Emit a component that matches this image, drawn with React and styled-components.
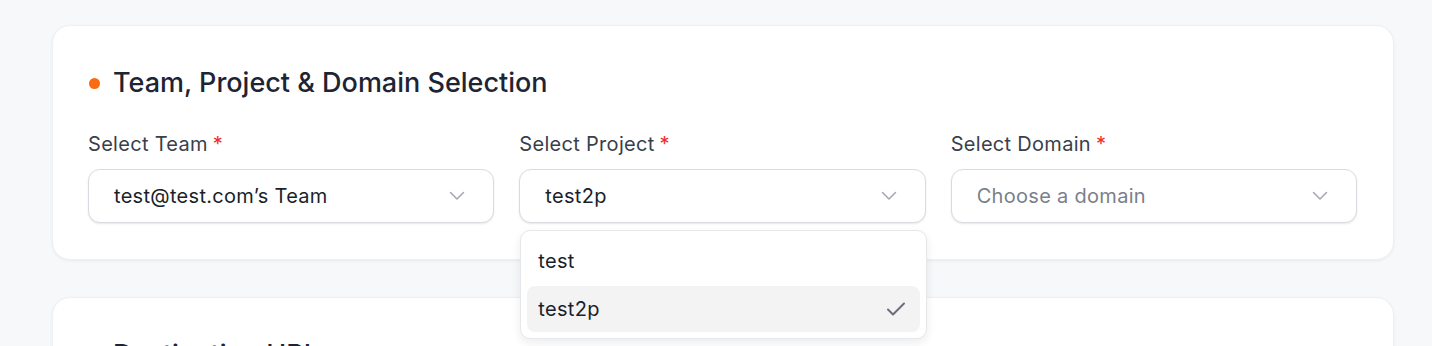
import React from "react";
import styled, { createGlobalStyle } from "styled-components";

const Global = createGlobalStyle`
  html, body {
    margin: 0;
    padding: 0;
    background: #f7f8fa;
    font-family: Inter, "Noto Sans", sans-serif;
    color: #1f2937;
    overflow: hidden;
  }
`;

const Page = styled.div`
  padding: 25px 38px 0 52px;
  display: flex;
  flex-direction: column;
  gap: 37px;
`;

const Card = styled.section`
  background: #fff;
  border-radius: 18px;
  border: 1px solid #eef0f3;
  box-shadow: 0 1px 3px rgba(16, 24, 40, 0.06);
  padding: 37px 36px 36px 35px;
  min-height: ${(p) => p.minH || 0}px;
`;

const Title = styled.h2`
  margin: 0 0 29px;
  display: flex;
  align-items: center;
  gap: 13px;
  font-size: 27px;
  font-weight: 500;
  color: #1e2433;
  line-height: 40px;
`;

const Dot = styled.span`
  width: 11px;
  height: 11px;
  border-radius: 50%;
  background: #f76b15;
  margin-left: 1px;
`;

const Grid = styled.div`
  display: grid;
  grid-template-columns: repeat(3, 1fr);
  gap: 25px;
`;

const Field = styled.div`
  position: relative;
  display: flex;
  flex-direction: column;
  gap: 13px;
`;

const Label = styled.label`
  font-size: 20px;
  letter-spacing: 0.3px;
  color: #3a3f4b;
  line-height: 24px;
  span {
    color: #ef2b2b;
    margin-left: 5px;
  }
`;

const Trigger = styled.div`
  height: 54px;
  box-sizing: border-box;
  border: 1px solid #d9dbe1;
  border-radius: 12px;
  box-shadow: 0 1px 2px rgba(16, 24, 40, 0.1);
  display: flex;
  align-items: center;
  justify-content: space-between;
  padding: 0 28px 0 25px;
  font-size: 20px;
  letter-spacing: 0.3px;
  color: ${(p) => (p.placeholder ? "#7a7f8c" : "#1b1f2a")};
  background: #fff;
`;

const Menu = styled.div`
  position: absolute;
  top: 98px;
  left: 1px;
  right: -1px;
  background: #fff;
  border: 1px solid #e5e7eb;
  border-radius: 10px;
  box-shadow: 0 4px 10px rgba(16, 24, 40, 0.08);
  padding: 7px 6px 6px;
  box-sizing: border-box;
  display: flex;
  flex-direction: column;
  gap: 2px;
  z-index: 5;
`;

const Option = styled.div`
  height: 46px;
  border-radius: 8px;
  display: flex;
  align-items: center;
  justify-content: space-between;
  padding: 0 14px 0 11px;
  font-size: 20px;
  letter-spacing: 0.3px;
  color: #1b1f2a;
  background: ${(p) => (p.active ? "#f3f3f4" : "transparent")};
`;

const Chevron = () => (
  <svg width="16" height="10" viewBox="0 0 16 10" fill="none">
    <path d="M1.5 1.5 L8 8 L14.5 1.5" stroke="#a3a7b0" strokeWidth="1.5" strokeLinecap="round" strokeLinejoin="round" />
  </svg>
);

const Check = () => (
  <svg width="20" height="16" viewBox="0 0 20 16" fill="none">
    <path d="M2 8.5 L7 13.5 L18 2.5" stroke="#6b6e78" strokeWidth="2" strokeLinecap="round" strokeLinejoin="round" />
  </svg>
);

const SelectField = ({ label, value, placeholder, options, open }) => (
  <Field>
    <Label>
      {label}
      <span>*</span>
    </Label>
    <Trigger placeholder={!value ? 1 : 0}>
      {value || placeholder}
      <Chevron />
    </Trigger>
    {open && (
      <Menu>
        {options.map((o) => (
          <Option key={o} active={o === value ? 1 : 0}>
            {o}
            {o === value && <Check />}
          </Option>
        ))}
      </Menu>
    )}
  </Field>
);

export default function App() {
  return (
    <>
      <Global />
      <Page>
        <Card>
          <Title>
            <Dot />
            Team, Project &amp; Domain Selection
          </Title>
          <Grid>
            <SelectField label="Select Team" value="test@test.com’s Team" />
            <SelectField label="Select Project" value="test2p" options={["test", "test2p"]} open />
            <SelectField label="Select Domain" placeholder="Choose a domain" />
          </Grid>
        </Card>
        <Card minH={200}>
          <Title>
            <Dot />
            Destination URL
          </Title>
        </Card>
      </Page>
    </>
  );
}
